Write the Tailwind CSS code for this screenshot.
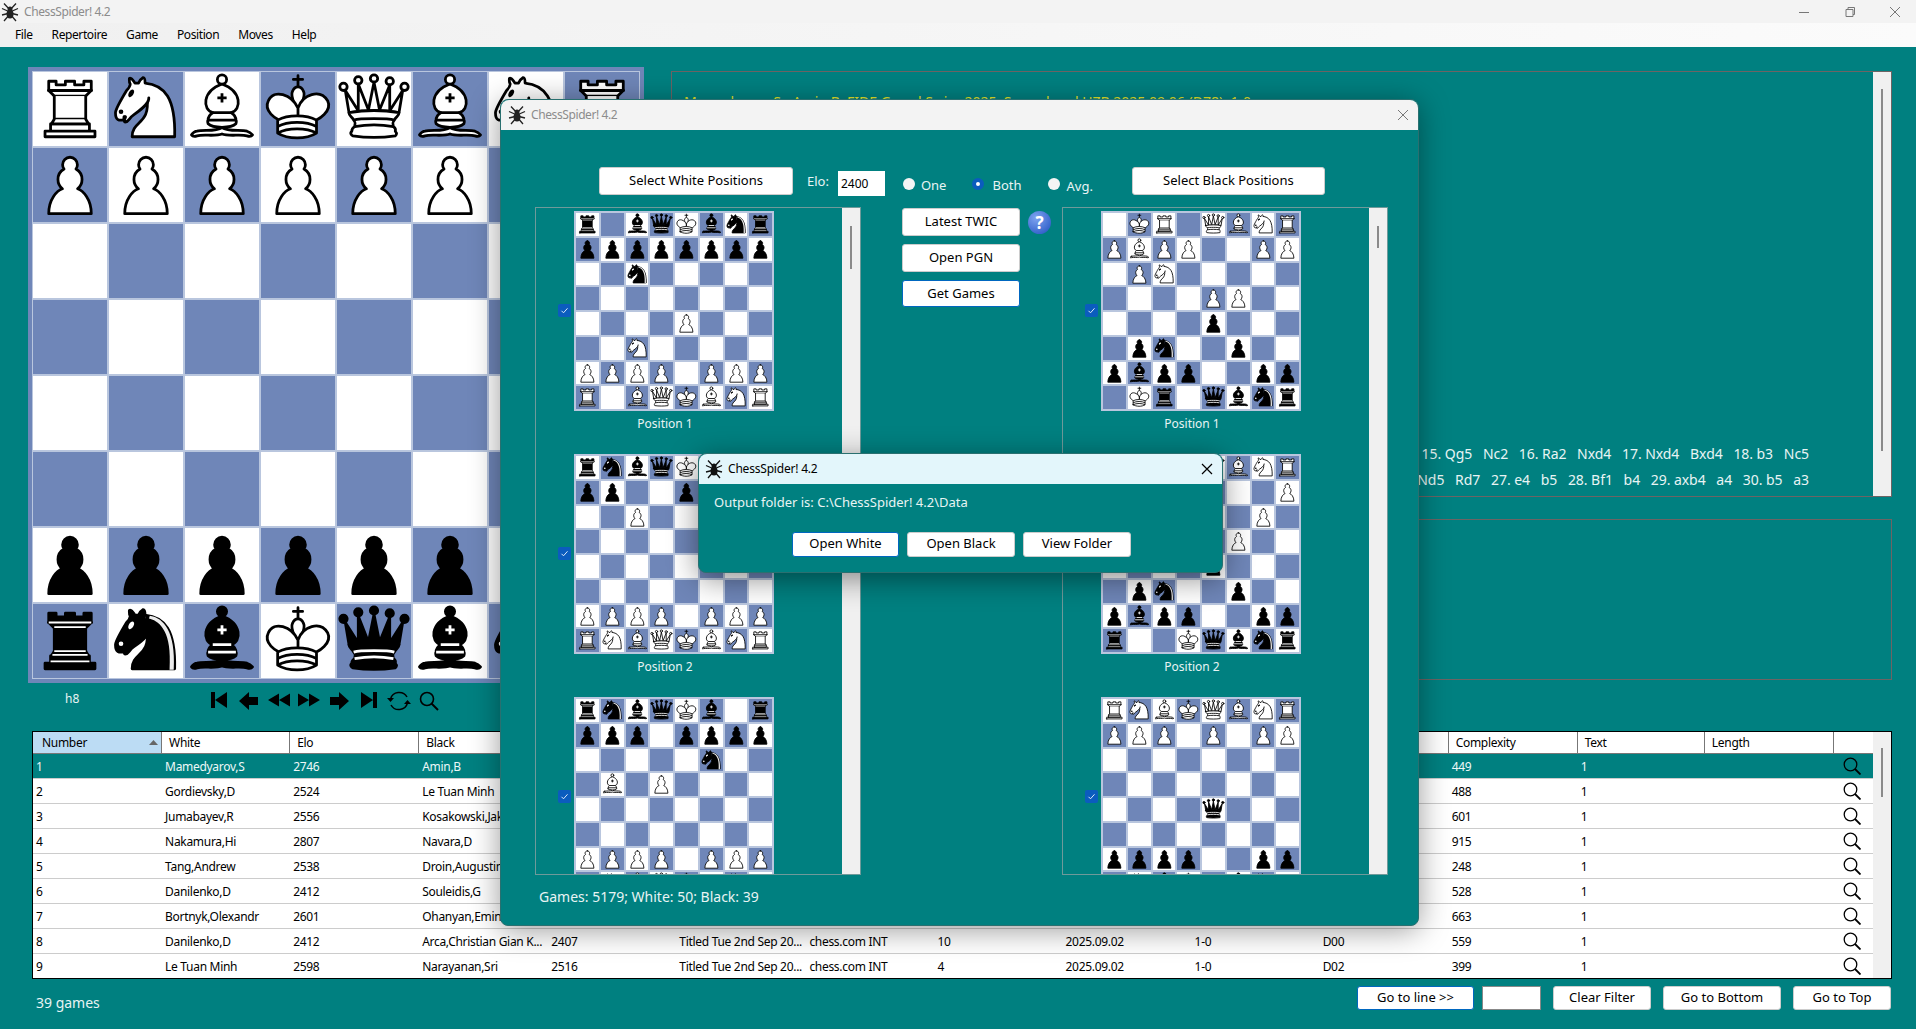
<!DOCTYPE html>
<html lang="en">
<head>
  <meta charset="UTF-8">
  <title>ChessSpider! 4.2</title>
  <script src="https://cdn.jsdelivr.net/npm/@tailwindcss/browser@4"></script>
</head>
<body class="bg-[#008080]">
<div class="relative w-[1916px] h-[1029px] overflow-hidden bg-[#008080] font-['Noto_Sans',sans-serif] text-[12px]">

  <!-- title bar -->
  <div class="h-[23px] bg-[#f3f3f3] flex items-center text-[#8c8c8c]">
    <svg class="spider w-[18px] h-[20px] ml-[1px] text-[#222]" viewBox="0 0 18 20"></svg>
    <span class="ml-[5px] tracking-[-0.4px]">ChessSpider! 4.2</span>
    <div class="ml-auto flex items-center text-[#777]">
      <svg class="w-[12px] h-[12px] mr-[34px]" viewBox="0 0 12 12"><path d="M1 6.500h10" stroke="currentColor"/></svg>
      <svg class="w-[12px] h-[12px] mr-[33px]" viewBox="0 0 12 12"><path d="M2 3.500h7v7H2zM4 3.500V1.500h6.500v7H9" fill="none" stroke="currentColor"/></svg>
      <svg class="w-[12px] h-[12px] mr-[15px]" viewBox="0 0 12 12"><path d="M1 1l10 10M11 1L1 11" stroke="currentColor"/></svg>
    </div>
  </div>

  <!-- menu -->
  <div class="h-[24px] flex items-center bg-gradient-to-r from-[#f0f0f0] to-[#fbfbfb] text-black pl-[15px] gap-[19px] tracking-[-0.4px]">
    <span>File</span><span>Repertoire</span><span>Game</span><span>Position</span><span>Moves</span><span>Help</span>
  </div>

  <!-- board + text panels -->
  <div class="flex h-[636px] pt-[20px] pl-[28px]">
    <div class="w-[616px] h-[616px] border-4 border-[#6f86b8]">
      <div id="mainBoard" class="grid grid-cols-8 grid-rows-8 w-[608px] h-[608px]"></div>
    </div>
    <div class="ml-[27px] mt-[4px] w-[1221px] h-[609px] flex flex-col">
      <div class="h-[426px] flex border border-[#6d6464]">
        <div class="flex-1 flex flex-col pl-[12px] pr-[64px] pb-[3px] text-[14px] leading-[26px] text-[#e8f4f4]">
          <div class="pt-[17px] text-[#e6e62a] whitespace-pre">Mamedyarov,S - Amin,B  FIDE Grand Swiss 2025  Samarkand UZB 2025.09.06 (D78)  1-0</div>
          <div class="mt-auto text-right whitespace-pre tracking-[-0.06px]">15. Qg5   Nc2   16. Ra2   Nxd4   17. Nxd4   Bxd4   18. b3   Nc5</div>
          <div class="text-right whitespace-pre tracking-[-0.06px]">26. Nd5   Rd7   27. e4   b5   28. Bf1   b4   29. axb4   a4   30. b5   a3</div>
        </div>
        <div class="w-[18px] bg-[#f0f0f0]"><div class="mx-auto w-[2px] h-[362px] mt-[17px] bg-[#8a8a8a]"></div></div>
      </div>
      <div class="mt-[22px] h-[161px] border border-[#6d6464]"></div>
    </div>
  </div>

  <!-- square name + nav buttons -->
  <div class="h-[48px] flex pl-[32px] text-[#e8f4f4]">
    <div class="w-[172px] pl-[33px] pt-[7px]">h8</div>
    <div class="flex items-start pt-[8px]">
      <button class="w-[30px] h-[24px] flex justify-center"><svg class="w-[18px] h-[18px]" viewBox="0 0 18 18"><path d="M1 1h4v16H1zM17 1v16L5 9z"/></svg></button>
      <button class="w-[30px] h-[24px] flex justify-center"><svg class="w-[20px] h-[20px]" viewBox="0 0 20 20"><path d="M0 10L10 1v5h9v8h-9v5z"/></svg></button>
      <button class="w-[30px] h-[24px] flex justify-center"><svg class="w-[22px] h-[18px]" viewBox="0 0 22 18"><path d="M0 9l11-6.500v13zM11 9l11-6.500v13z"/></svg></button>
      <button class="w-[30px] h-[24px] flex justify-center"><svg class="w-[22px] h-[18px]" viewBox="0 0 22 18"><path d="M22 9L11 2.500v13zM11 9L0 2.500v13z"/></svg></button>
      <button class="w-[30px] h-[24px] flex justify-center"><svg class="w-[20px] h-[20px]" viewBox="0 0 20 20"><path d="M20 10L10 1v5H1v8h9v5z"/></svg></button>
      <button class="w-[30px] h-[24px] flex justify-center"><svg class="w-[18px] h-[18px]" viewBox="0 0 18 18"><path d="M13 1h4v16h-4zM1 1v16l12-8z"/></svg></button>
      <button class="w-[30px] h-[24px] flex justify-center"><svg class="w-[24px] h-[22px] -mt-[1px]" viewBox="0 0 24 22"><path d="M3.500 9A9 9 0 0 1 20 7M20.500 13A9 9 0 0 1 4 15" fill="none" stroke="#000" stroke-width="1.500"/><path d="M0 8h7l-3.500 4zM17 14h7l-3.500-4z"/></svg></button>
      <button class="w-[30px] h-[24px] flex justify-center"><svg class="w-[20px] h-[20px]" viewBox="0 0 20 20"><circle cx="8" cy="8" r="6.500" fill="none" stroke="#000" stroke-width="1.600"/><path d="M12.500 12.500L19 19" stroke="#000" stroke-width="2"/></svg></button>
    </div>
  </div>

  <!-- games table -->
  <div class="ml-[32px] w-[1860px] h-[248px] flex border border-black bg-white overflow-hidden">
    <div class="w-[1841px] overflow-hidden">
      <table class="table-fixed border-separate border-spacing-0 w-[1841px] text-black tracking-[-0.3px]">
        <colgroup id="cols"></colgroup>
        <thead><tr id="head" class="h-[22px]"></tr></thead>
        <tbody id="rows"></tbody>
      </table>
    </div>
    <div class="w-[18px] bg-[#f0f0f0]"><div class="mx-auto w-[2px] h-[49px] mt-[16px] bg-[#8a8a8a]"></div></div>
  </div>

  <!-- footer -->
  <div class="flex pt-[7px] pl-[36px] text-[#e8f4f4]">
    <span class="text-[14px] leading-[34px]">39 games</span>
    <div class="ml-auto mr-[25px] flex text-[13px] text-black">
      <button class="w-[117px] h-[24px] bg-white border border-[#0067c0] rounded-[3px]">Go to line &gt;&gt;</button>
      <div class="w-[59px] h-[24px] ml-[8px] bg-white border border-[#888]"></div>
      <button class="w-[98px] h-[24px] ml-[12px] bg-white border border-[#ccc] rounded-[3px]">Clear Filter</button>
      <button class="w-[118px] h-[24px] ml-[12px] bg-white border border-[#ccc] rounded-[3px]">Go to Bottom</button>
      <button class="w-[98px] h-[24px] ml-[12px] bg-white border border-[#ccc] rounded-[3px]">Go to Top</button>
    </div>
  </div>

  <!-- positions dialog -->
  <div class="absolute left-[500px] top-[99px] w-[919px] h-[827px] rounded-lg bg-[#008080] border border-[#2a7070] shadow-[0_4px_30px_rgba(0,0,0,0.4)] text-[#e8f4f4]">
    <div class="h-[30px] rounded-t-lg bg-[#f3f3f3] flex items-center text-[#8c8c8c]">
      <svg class="spider w-[18px] h-[20px] ml-[7px] text-[#222]" viewBox="0 0 18 20"></svg>
      <span class="ml-[5px] tracking-[-0.4px]">ChessSpider! 4.2</span>
      <svg class="w-[12px] h-[12px] ml-auto mr-[9px] text-[#777]" viewBox="0 0 12 12"><path d="M1 1l10 10M11 1L1 11" stroke="currentColor"/></svg>
    </div>

    <div class="flex h-[77px] pt-[37px] text-[13px]">
      <button class="w-[194px] h-[28px] ml-[98px] bg-white text-black border border-[#ccc] rounded-[3px]">Select White Positions</button>
      <span class="ml-[14px] mt-[5px]">Elo:</span>
      <input class="w-[47px] h-[25px] ml-[9px] mt-[4px] bg-white text-black text-[12px] pl-[3px]" value="2400">
      <span class="w-[12px] h-[12px] ml-[18px] mt-[11px] rounded-full bg-[#f4f4f4]"></span>
      <span class="ml-[6px] mt-[9px]">One</span>
      <span class="w-[12px] h-[12px] ml-[26px] mt-[11px] rounded-full border-[4px] border-[#0b5cbe] bg-white"></span>
      <span class="ml-[8px] mt-[9px]">Both</span>
      <span class="w-[12px] h-[12px] ml-[26px] mt-[11px] rounded-full bg-[#f4f4f4]"></span>
      <span class="ml-[7px] mt-[10px]">Avg.</span>
      <button class="w-[193px] h-[28px] ml-[39px] bg-white text-black border border-[#ccc] rounded-[3px]">Select Black Positions</button>
    </div>

    <div class="flex pl-[34px]">
      <div class="w-[326px] h-[668px] flex border border-[#6f9a9a]">
        <div id="whiteList" class="flex-1 overflow-hidden"></div>
        <div class="w-[18px] bg-[#f0f0f0]"><div class="mx-auto w-[2px] h-[43px] mt-[18px] bg-[#8a8a8a]"></div></div>
      </div>
      <div class="w-[201px] pl-[41px] pt-[1px] flex flex-col gap-[8px] text-[13px] text-black">
        <div class="flex items-center">
          <button class="w-[118px] h-[28px] bg-white border border-[#ccc] rounded-[3px]">Latest TWIC</button>
          <span class="w-[23px] h-[23px] ml-[8px] rounded-full bg-[radial-gradient(circle_at_35%_30%,#7ea4f0,#1f4fc0)] text-white text-[17px] font-bold leading-[23px] text-center">?</span>
        </div>
        <button class="w-[118px] h-[28px] bg-white border border-[#ccc] rounded-[3px]">Open PGN</button>
        <button class="w-[118px] h-[27px] bg-white border border-[#0067c0] rounded-[3px]">Get Games</button>
      </div>
      <div class="w-[326px] h-[668px] flex border border-[#6f9a9a]">
        <div id="blackList" class="flex-1 overflow-hidden"></div>
        <div class="w-[18px] bg-[#f0f0f0]"><div class="mx-auto w-[2px] h-[22px] mt-[18px] bg-[#8a8a8a]"></div></div>
      </div>
    </div>

    <div class="pl-[38px] pt-[11px] text-[14px]">Games: 5179; White: 50; Black: 39</div>
  </div>

  <!-- output dialog -->
  <div class="absolute left-[698px] top-[453px] w-[525px] h-[120px] rounded-lg bg-[#008080] border border-[#2a7070] shadow-[0_6px_30px_rgba(0,0,0,0.45)] text-[#e8f4f4]">
    <div class="h-[30px] rounded-t-lg bg-[#e3f6fb] flex items-center text-black">
      <svg class="spider w-[18px] h-[20px] ml-[6px] text-[#111]" viewBox="0 0 18 20"></svg>
      <span class="ml-[5px] tracking-[-0.2px]">ChessSpider! 4.2</span>
      <svg class="w-[12px] h-[12px] ml-auto mr-[9px] text-black" viewBox="0 0 12 12"><path d="M1 1l10 10M11 1L1 11" stroke="currentColor" stroke-width="1.200"/></svg>
    </div>
    <div class="pl-[15px] pt-[9px] text-[13px]">Output folder is: C:\ChessSpider! 4.2\Data</div>
    <div class="flex pl-[93px] pt-[19px] gap-[8px] text-[13px] text-black">
      <button class="w-[107px] h-[25px] bg-white border border-[#0067c0] rounded-[3px]">Open White</button>
      <button class="w-[108px] h-[25px] bg-white border border-[#ccc] rounded-[3px]">Open Black</button>
      <button class="w-[108px] h-[25px] bg-white border border-[#ccc] rounded-[3px]">View Folder</button>
    </div>
  </div>
</div>

<script>
  // spider logo used in the three title bars
  const spider = `<g stroke="currentColor" stroke-width="1.300" fill="none">
    <path d="M9 8L3 1.500M9 8L15 1.500M9 10L1 6.500M9 10L17 6.500M9 11L1 13M9 11L17 13M9 12L3 19M9 12L15 19"/></g>
    <ellipse cx="9" cy="7" rx="2.500" ry="2.500" fill="currentColor"/><ellipse cx="9" cy="12" rx="3.500" ry="4.500" fill="currentColor"/>`;
  document.querySelectorAll('.spider').forEach(s => s.innerHTML = spider);

  // chess pieces, drawn on a 45 unit grid
  const group = (f, s, body) => `<g fill="${f}" stroke="${s}" stroke-width="1.500" stroke-linecap="round" stroke-linejoin="round">${body}</g>`;
  const PIECES = {
    p: (f, s) => group(f, s, `<path d="M22.5 9c-2.21 0-4 1.790-4 4 0 .89.29 1.710.78 2.380C17.330 16.500 16 18.590 16 21c0 2.030.94 3.840 2.410 5.030-3 1.060-7.410 5.550-7.410 13.470h23c0-7.920-4.410-12.410-7.410-13.470 1.470-1.190 2.410-3 2.410-5.030 0-2.410-1.330-4.500-3.280-5.620.49-.67.78-1.490.78-2.380 0-2.210-1.790-4-4-4z"/>`),
    r: (f, s, l) => group(f, s, `<path d="M9 39h27v-3H9v3zM12 36v-4h21v4H12zM11 14V9h4v2h5V9h5v2h5V9h4v5"/><path d="M34 14l-3 3H14l-3-3"/><path d="M31 17v12.500H14V17"/><path d="M31 29.500l1.500 2.500h-20l1.500-2.500"/><path d="M11 14h23" fill="none"/>`)
      + (l === '#fff' ? `<path d="M12 35h21M13 31.500h19M14 29.500h17M14 16.500h17M11 14h23" stroke="#fff" stroke-width="1" fill="none"/>` : ''),
    n: (f, s, l) => group(f, s, `<path d="M22 10c10.500 1 16.500 8 16 29H15c0-9 10-6.500 8-21"/><path d="M24 18c.38 2.910-5.550 7.370-8 9-3 2-2.820 4.340-5 4-1.042-.94 1.410-3.040 0-3-1 0 .19 1.230-1 2-1 0-4.003 1-4-4 0-2 6-12 6-12s1.890-1.900 2-3.500c-.73-.994-.5-2-.5-3 1-1 3 2.500 3 2.500h2s.78-1.992 2.500-3c1 0 1 3 1 3"/><path d="M9.500 25.500a.5.5 0 1 1-1 0 .5.5 0 1 1 1 0zm5.433-9.750a.5 1.500 30 1 1-.866-.5.5 1.500 30 1 1 .866.5z" fill="${l === '#fff' ? '#fff' : '#000'}" stroke="${l === '#fff' ? '#fff' : '#000'}"/>`)
      + (l === '#fff' ? `<path d="M24.550 10.400l-.45 1.450.5.15c3.150 1 5.650 2.490 7.900 6.750S35.750 29.060 35.250 39l-.05.5h2.250l.05-.5c.5-10.060-.88-16.850-3.250-21.340-2.370-4.490-5.790-6.640-9.190-7.160l-.51-.1z" fill="#ececec"/>` : ''),
    b: (f, s, l) => group(f, s, `<path d="M9 36c3.390-.97 10.110.43 13.500-2 3.390 2.430 10.110 1.030 13.500 2 0 0 1.650.54 3 2-.68.97-1.650.99-3 .5-3.390-.97-10.110.46-13.500-1-3.390 1.460-10.110.03-13.500 1-1.354.49-2.323.47-3-.5 1.354-1.940 3-2 3-2z"/><path d="M15 32c2.500 2.500 12.500 2.500 15 0 .5-1.500 0-2 0-2 0-2.500-2.500-4-2.500-4 5.500-1.500 6-11.500-5-15.500-11 4-10.500 14-5 15.500 0 0-2.500 1.500-2.500 4 0 0-.5.5 0 2z"/><path d="M25 8a2.500 2.500 0 1 1-5 0 2.500 2.500 0 1 1 5 0z"/>`)
      + `<path d="M17.500 26h10M15 30h15m-7.500-14.500v5M20 18h5" stroke="${l}" stroke-width="1.500" fill="none"/>`,
    q: (f, s, l) => group(f, s, `<path d="M8 12a2 2 0 1 1-4 0 2 2 0 1 1 4 0zM24.500 7.500a2 2 0 1 1-4 0 2 2 0 1 1 4 0zM41 12a2 2 0 1 1-4 0 2 2 0 1 1 4 0zM16 8.500a2 2 0 1 1-4 0 2 2 0 1 1 4 0zM33 9a2 2 0 1 1-4 0 2 2 0 1 1 4 0z"/><path d="M9 26c8.500-1.500 21-1.500 27 0l2-12-7 11V11l-5.500 13.500-3-15-3 15-5.500-14V25L7 14l2 12z"/><path d="M9 26c0 2 1.500 2 2.500 4 1 1.500 1 1 .5 3.500-1.500 1-1.500 2.500-1.500 2.500-1.500 1.500.5 2.500.5 2.500 6.500 1 16.500 1 23 0 0 0 1.500-1 0-2.500 0 0 .5-1.500-1-2.500-.5-2.500-.5-2 .5-3.500 1-2 2.500-2 2.500-4-8.500-1.500-18.500-1.500-27 0z"/>`)
      + `<path d="M11.500 30c3.500-1 18.500-1 22 0M12 33.500c6-1 15-1 21 0" stroke="${l}" stroke-width="1.500" fill="none"/>`,
    k: (f, s, l) => group('#fff', '#000', `<path d="M22.500 11.630V6M20 8h5"/><path d="M22.500 25s4.500-7.500 3-10.500c0 0-1-2.500-3-2.500s-3 2.500-3 2.500c-1.500 3 3 10.500 3 10.500"/><path d="M11.500 37c5.500 3.500 15.500 3.500 21 0v-7s9-4.500 6-10.500c-4-6.500-13.500-3.500-16 4V27v-3.500c-3.500-7.500-13-10.500-16-4-3 6 5 10 5 10V37z"/>`)
      + `<path d="M11.500 30c5.500-3 15.500-3 21 0m-21 3.500c5.500-3 15.500-3 21 0m-21 3.500c5.500-3 15.500-3 21 0" stroke="#000" stroke-width="1.500" fill="none"/>`,
  };

  function pieceSvg(ch) {
    const isWhite = ch === ch.toUpperCase();
    const draw = PIECES[ch.toLowerCase()];
    const inner = isWhite ? draw('#fff', '#000', '#000') : draw('#000', '#000', '#fff');
    return `<svg viewBox="2.500 4 40 40" class="w-full h-full block">${inner}</svg>`;
  }

  // rows of 8 chars, '.' is an empty square
  function renderBoard(rows) {
    let html = '';
    rows.forEach((row, r) => {
      [...row].forEach((ch, c) => {
        const bg = (r + c) % 2 ? 'bg-[#6f86b8]' : 'bg-white';
        html += `<div class="${bg} border-[0.5px] border-[#b9c6de] min-w-0 min-h-0">${ch === '.' ? '' : pieceSvg(ch)}</div>`;
      });
    });
    return html;
  }

  document.getElementById('mainBoard').innerHTML = renderBoard([
    'RNBKQBNR', 'PPPPPPPP', '........', '........', '........', '........', 'pppppppp', 'rnbkqbnr'
  ]);

  const WHITE_POS = [
    ['r.bqkbnr', 'pppppppp', '..n.....', '........', '....P...', '..N.....', 'PPPP.PPP', 'R.BQKBNR'],
    ['rnbqk...', 'pp..p...', '..P.....', '........', '........', '........', 'PPPP.PPP', 'RNBQKBNR'],
    ['rnbqkb.r', 'ppp.pppp', '.....n..', '.B.P....', '........', '........', 'PPPP.PPP', 'RNBQK.NR'],
  ];
  const BLACK_POS = [
    ['.KR.QBNR', 'PBPP..PP', '.PN.....', '....PP..', '....p...', '.pn..p..', 'pbpp..pp', '.kr.qbnr'],
    ['.KR.QBNR', 'PBPP...P', '.PN...P.', '.....P..', '....p...', '.pn..p..', 'pbpp..pp', 'r..kqbnr'],
    ['RNBKQBNR', 'PPP.P.PP', '........', '........', '....q...', '........', 'pppp..pp', 'rnbk.bnr'],
  ];

  const check = `<span class="w-[13px] h-[13px] mt-[93px] shrink-0 rounded-[2px] bg-[#0b5cbe] flex items-center justify-center">
    <svg class="w-[9px] h-[9px]" viewBox="0 0 9 9"><path d="M1.500 4.800l2 2 4-4.500" fill="none" stroke="#dbe8fa" stroke-width="1"/></svg></span>`;

  function renderList(id, positions) {
    document.getElementById(id).innerHTML = positions.map((rows, i) => `
      <div class="h-[243px] pt-[3px] pl-[22px]">
        <div class="flex gap-[3px]">
          ${check}
          <div class="w-[200px]">
            <div class="grid grid-cols-8 grid-rows-8 w-[200px] h-[200px] border border-[#b9c6de] bg-white">${renderBoard(rows)}</div>
            <div class="pr-[18px] pt-[4px] text-center leading-[18px]">Position ${i + 1}</div>
          </div>
        </div>
      </div>`).join('');
  }
  renderList('whiteList', WHITE_POS);
  renderList('blackList', BLACK_POS);

  // games table
  const WIDTHS = [129, 128, 129, 129, 128, 130, 128, 128, 129, 128, 129, 129, 127, 129, 40];
  document.getElementById('cols').innerHTML = WIDTHS.map(w => `<col style="width:${w}px">`).join('');

  const HEAD = ['White', 'Elo', 'Black', 'Elo', 'Event', 'Site', 'Round', 'Date', 'Result', 'ECO', 'Complexity', 'Text', 'Length', ''];
  document.getElementById('head').innerHTML =
    `<th class="bg-[#bcdcf4] font-normal text-left pl-[9px] border-r border-b border-[#777] relative">Number
      <svg class="absolute right-[3px] top-[8px] w-[9px] h-[5px]" viewBox="0 0 9 5"><path d="M4.500 0L9 5H0z" fill="#666"/></svg></th>` +
    HEAD.map(h => `<th class="font-normal text-left pl-[7px] border-r border-b border-[#777]">${h}</th>`).join('');

  const GAMES = [
    ['1', 'Mamedyarov,S', '2746', 'Amin,B', '', '', '', '', '', '', '', '449'],
    ['2', 'Gordievsky,D', '2524', 'Le Tuan Minh', '', '', '', '', '', '', '', '488'],
    ['3', 'Jumabayev,R', '2556', 'Kosakowski,Jakub', '', '', '', '', '', '', '', '601'],
    ['4', 'Nakamura,Hi', '2807', 'Navara,D', '', '', '', '', '', '', '', '915'],
    ['5', 'Tang,Andrew', '2538', 'Droin,Augustin', '', '', '', '', '', '', '', '248'],
    ['6', 'Danilenko,D', '2412', 'Souleidis,G', '', '', '', '', '', '', '', '528'],
    ['7', 'Bortnyk,Olexandr', '2601', 'Ohanyan,Emin', '', '', '', '', '', '', '', '663'],
    ['8', 'Danilenko,D', '2412', 'Arca,Christian Gian K...', '2407', 'Titled Tue 2nd Sep 20...', 'chess.com INT', '10', '2025.09.02', '1-0', 'D00', '559'],
    ['9', 'Le Tuan Minh', '2598', 'Narayanan,Sri', '2516', 'Titled Tue 2nd Sep 20...', 'chess.com INT', '4', '2025.09.02', '1-0', 'D02', '399'],
  ];
  const lens = `<svg class="w-[18px] h-[18px] ml-[9px]" viewBox="0 0 18 18"><circle cx="7.500" cy="7.500" r="6.300" fill="none" stroke="#000" stroke-width="1.300"/><path d="M12 12l5.500 5.500" stroke="#000" stroke-width="1.800"/></svg>`;

  document.getElementById('rows').innerHTML = GAMES.map((g, i) => {
    const rowClass = i === 0 ? 'bg-[#008080] text-[#eef8f8]' : 'bg-white';
    const cells = [...g, '1', ''].map(v => `<td class="pl-[3px] pt-[1px] truncate border-b border-[#ccc]">${v}</td>`).join('');
    return `<tr class="h-[25px] ${rowClass}">${cells}<td class="border-b border-[#ccc]">${lens}</td></tr>`;
  }).join('');
</script>
</body>
</html>
